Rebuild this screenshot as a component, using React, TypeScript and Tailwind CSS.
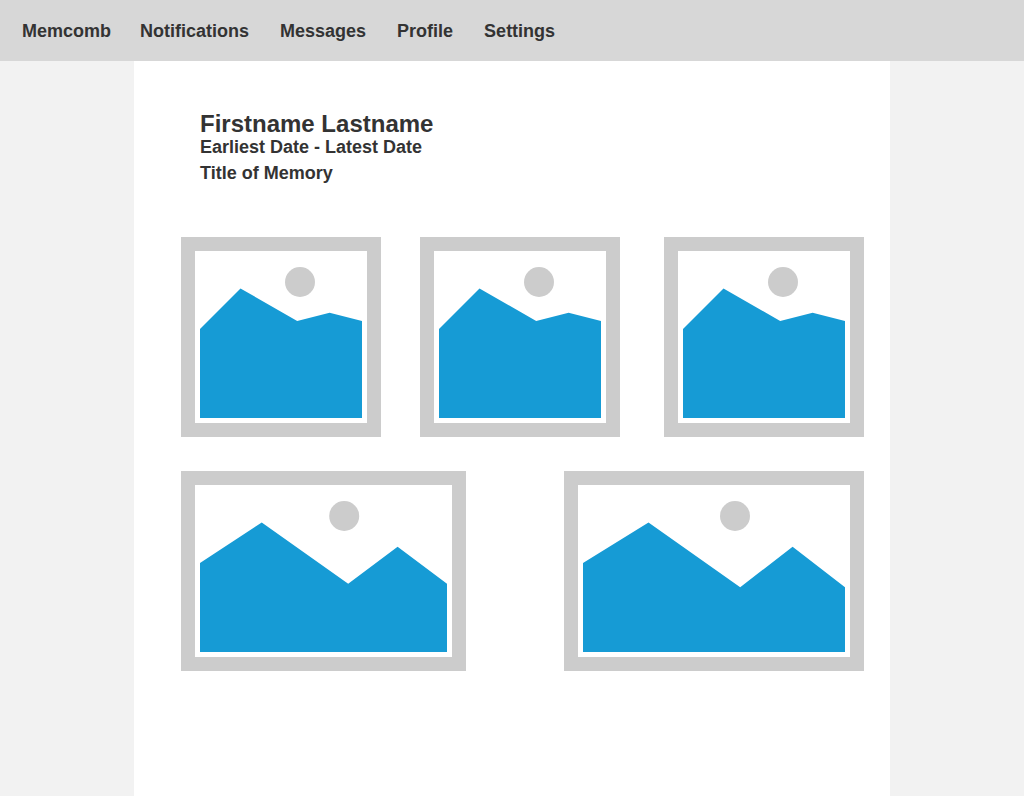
type PhotoProps = {
  label: string;
  width: number;
  sunX: number;
  ridge: string;
};

const navItems = ['Notifications', 'Messages', 'Profile', 'Settings'];

const smallRidge = '5,167 5,78 45.5,37.5 102.2,69.9 134.6,61.8 167,69.9 167,167';

const topRow: PhotoProps[] = [
  { label: 'Photo 1', width: 172, sunX: 105, ridge: smallRidge },
  { label: 'Photo 2', width: 172, sunX: 105, ridge: smallRidge },
  { label: 'Photo 3', width: 172, sunX: 105, ridge: smallRidge },
];

const bottomRow: PhotoProps[] = [
  {
    label: 'Photo 4',
    width: 257,
    sunX: 149.2,
    ridge: '5,167 5,78 66.75,37.5 153.2,98.8 202.6,61.8 252,98.8 252,167',
  },
  {
    label: 'Photo 5',
    width: 272,
    sunX: 157,
    ridge: '5,167 5,78 70.5,37.5 162.2,102.2 214.6,61.8 267,102.2 267,167',
  },
];

function Photo({ label, width, sunX, ridge }: PhotoProps) {
  return (
    <li className="border-14 border-[#ccc] bg-white last:ml-auto">
      <svg
        role="img"
        aria-label={label}
        className="block"
        width={width}
        height={172}
        viewBox={`0 0 ${width} 172`}
      >
        <circle cx={sunX} cy={31} r={15} fill="#ccc" />
        <polygon points={ridge} fill="#169bd5" />
      </svg>
    </li>
  );
}

export default function App() {
  return (
    <div className="flex min-h-screen flex-col bg-[#f2f2f2] font-['Liberation_Sans',Arial,sans-serif] font-bold text-[#333]">
      <header className="bg-[#d7d7d7]">
        <nav className="flex flex-wrap items-center gap-x-[29px] px-[22px] pt-[21px] pb-5 text-lg leading-5">
          <a href="#home">Memcomb</a>
          <ul className="flex flex-wrap gap-x-[31px]">
            {navItems.map((item) => (
              <li key={item}>
                <a href={`#${item.toLowerCase()}`}>{item}</a>
              </li>
            ))}
          </ul>
        </nav>
      </header>

      <main className="mx-auto w-full max-w-[756px] grow bg-white pt-[50px] pr-[26px] pb-12 pl-[47px]">
        <div className="pl-[19px] text-lg leading-5">
          <h1 className="text-2xl leading-[26px]">Firstname Lastname</h1>
          <p>Earliest Date - Latest Date</p>
          <h2 className="mt-1.5">Title of Memory</h2>
        </div>

        <ul className="mt-[54px] flex flex-wrap gap-x-[39px] gap-y-6">
          {topRow.map((photo) => (
            <Photo key={photo.label} {...photo} />
          ))}
        </ul>
        <ul className="mt-[34px] flex flex-wrap gap-x-[39px] gap-y-6">
          {bottomRow.map((photo) => (
            <Photo key={photo.label} {...photo} />
          ))}
        </ul>
      </main>
    </div>
  );
}
